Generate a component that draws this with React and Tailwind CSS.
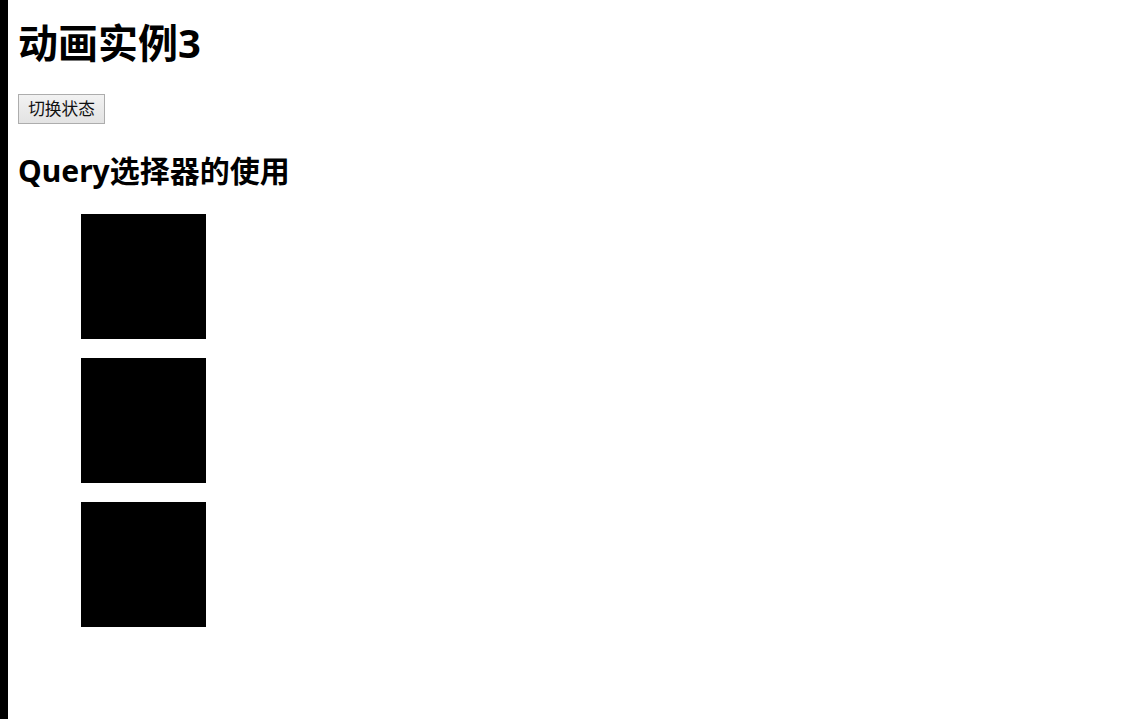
import React from 'react';

const font = { fontFamily: '"Noto Sans", "Noto Sans CJK SC", sans-serif' };

const Box = () => <div className="w-[125px] h-[125px] bg-black" />;

export default function App() {
  return (
    <div className="flex min-h-screen bg-white text-black" style={font}>
      <div className="w-[8px] shrink-0 bg-black" />
      <main className="flex-1 pl-[10px]">
        <h1 className="mt-[23px] h-[40px] text-[40px] leading-[40px] font-bold">动画实例3</h1>
        <div className="mt-[31px]">
          <button className="h-[30px] w-[87px] border border-[#adadad] bg-gradient-to-b from-[#f2f2f2] to-[#e3e3e3] text-[16.7px] leading-none text-[#111]">
            切换状态
          </button>
        </div>
        <h2 className="mt-[32px] h-[30px] text-[30px] leading-[30px] font-bold">Query选择器的使用</h2>
        <div className="mt-[28px] ml-[63px] flex flex-col gap-[19px]">
          <Box />
          <Box />
          <Box />
        </div>
      </main>
    </div>
  );
}
